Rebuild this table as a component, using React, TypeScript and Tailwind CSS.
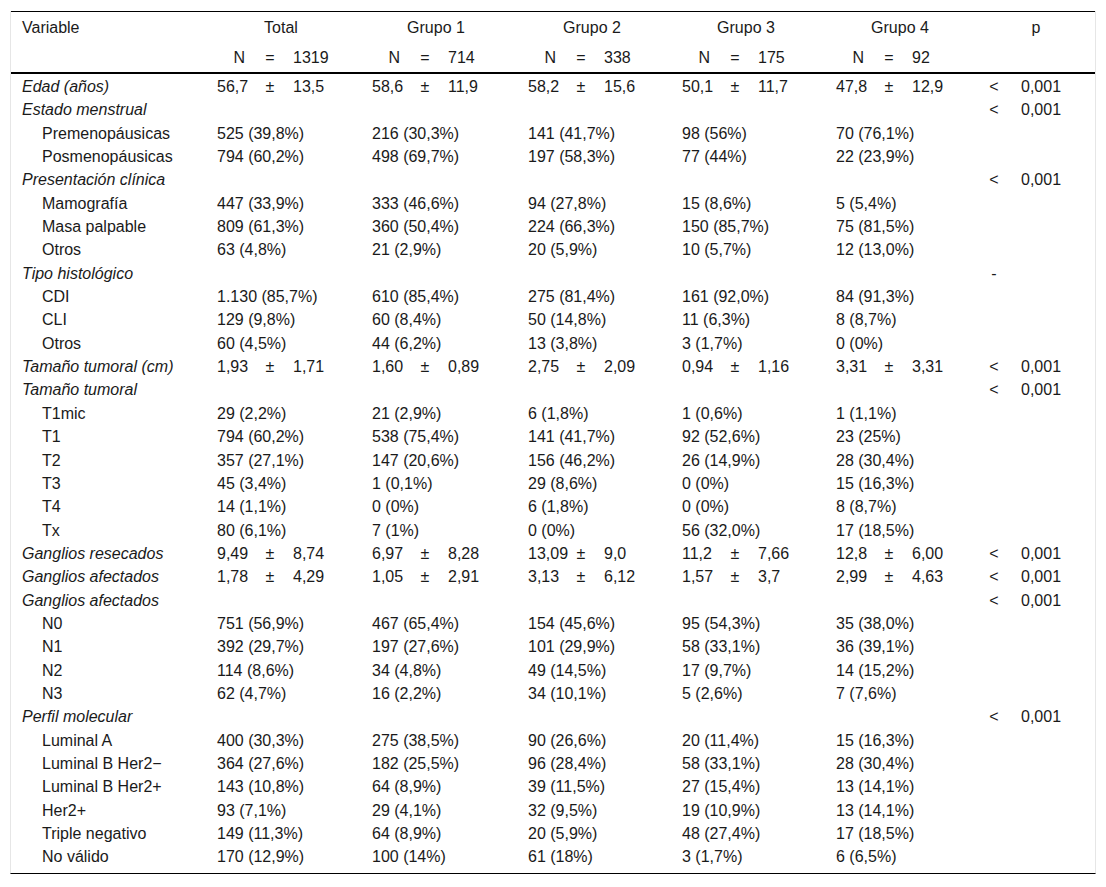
type MeanSd = [string, string]
type Row =
  | { kind: "mean"; label: string; values: MeanSd[]; p: [string, string] }
  | { kind: "cat"; label: string; p?: [string, string] }
  | { kind: "item"; label: string; values: string[] }

const ROWS: Row[] = [
  {
    kind: "mean",
    label: "Edad (años)",
    values: [["56,7", "13,5"], ["58,6", "11,9"], ["58,2", "15,6"], ["50,1", "11,7"], ["47,8", "12,9"]],
    p: ["<", "0,001"],
  },
  { kind: "cat", label: "Estado menstrual", p: ["<", "0,001"] },
  { kind: "item", label: "Premenopáusicas", values: ["525 (39,8%)", "216 (30,3%)", "141 (41,7%)", "98 (56%)", "70 (76,1%)"] },
  { kind: "item", label: "Posmenopáusicas", values: ["794 (60,2%)", "498 (69,7%)", "197 (58,3%)", "77 (44%)", "22 (23,9%)"] },
  { kind: "cat", label: "Presentación clínica", p: ["<", "0,001"] },
  { kind: "item", label: "Mamografía", values: ["447 (33,9%)", "333 (46,6%)", "94 (27,8%)", "15 (8,6%)", "5 (5,4%)"] },
  { kind: "item", label: "Masa palpable", values: ["809 (61,3%)", "360 (50,4%)", "224 (66,3%)", "150 (85,7%)", "75 (81,5%)"] },
  { kind: "item", label: "Otros", values: ["63 (4,8%)", "21 (2,9%)", "20 (5,9%)", "10 (5,7%)", "12 (13,0%)"] },
  { kind: "cat", label: "Tipo histológico", p: ["-", ""] },
  { kind: "item", label: "CDI", values: ["1.130 (85,7%)", "610 (85,4%)", "275 (81,4%)", "161 (92,0%)", "84 (91,3%)"] },
  { kind: "item", label: "CLI", values: ["129 (9,8%)", "60 (8,4%)", "50 (14,8%)", "11 (6,3%)", "8 (8,7%)"] },
  { kind: "item", label: "Otros", values: ["60 (4,5%)", "44 (6,2%)", "13 (3,8%)", "3 (1,7%)", "0 (0%)"] },
  {
    kind: "mean",
    label: "Tamaño tumoral (cm)",
    values: [["1,93", "1,71"], ["1,60", "0,89"], ["2,75", "2,09"], ["0,94", "1,16"], ["3,31", "3,31"]],
    p: ["<", "0,001"],
  },
  { kind: "cat", label: "Tamaño tumoral", p: ["<", "0,001"] },
  { kind: "item", label: "T1mic", values: ["29 (2,2%)", "21 (2,9%)", "6 (1,8%)", "1 (0,6%)", "1 (1,1%)"] },
  { kind: "item", label: "T1", values: ["794 (60,2%)", "538 (75,4%)", "141 (41,7%)", "92 (52,6%)", "23 (25%)"] },
  { kind: "item", label: "T2", values: ["357 (27,1%)", "147 (20,6%)", "156 (46,2%)", "26 (14,9%)", "28 (30,4%)"] },
  { kind: "item", label: "T3", values: ["45 (3,4%)", "1 (0,1%)", "29 (8,6%)", "0 (0%)", "15 (16,3%)"] },
  { kind: "item", label: "T4", values: ["14 (1,1%)", "0 (0%)", "6 (1,8%)", "0 (0%)", "8 (8,7%)"] },
  { kind: "item", label: "Tx", values: ["80 (6,1%)", "7 (1%)", "0 (0%)", "56 (32,0%)", "17 (18,5%)"] },
  {
    kind: "mean",
    label: "Ganglios resecados",
    values: [["9,49", "8,74"], ["6,97", "8,28"], ["13,09", "9,0"], ["11,2", "7,66"], ["12,8", "6,00"]],
    p: ["<", "0,001"],
  },
  {
    kind: "mean",
    label: "Ganglios afectados",
    values: [["1,78", "4,29"], ["1,05", "2,91"], ["3,13", "6,12"], ["1,57", "3,7"], ["2,99", "4,63"]],
    p: ["<", "0,001"],
  },
  { kind: "cat", label: "Ganglios afectados", p: ["<", "0,001"] },
  { kind: "item", label: "N0", values: ["751 (56,9%)", "467 (65,4%)", "154 (45,6%)", "95 (54,3%)", "35 (38,0%)"] },
  { kind: "item", label: "N1", values: ["392 (29,7%)", "197 (27,6%)", "101 (29,9%)", "58 (33,1%)", "36 (39,1%)"] },
  { kind: "item", label: "N2", values: ["114 (8,6%)", "34 (4,8%)", "49 (14,5%)", "17 (9,7%)", "14 (15,2%)"] },
  { kind: "item", label: "N3", values: ["62 (4,7%)", "16 (2,2%)", "34 (10,1%)", "5 (2,6%)", "7 (7,6%)"] },
  { kind: "cat", label: "Perfil molecular", p: ["<", "0,001"] },
  { kind: "item", label: "Luminal A", values: ["400 (30,3%)", "275 (38,5%)", "90 (26,6%)", "20 (11,4%)", "15 (16,3%)"] },
  { kind: "item", label: "Luminal B Her2−", values: ["364 (27,6%)", "182 (25,5%)", "96 (28,4%)", "58 (33,1%)", "28 (30,4%)"] },
  { kind: "item", label: "Luminal B Her2+", values: ["143 (10,8%)", "64 (8,9%)", "39 (11,5%)", "27 (15,4%)", "13 (14,1%)"] },
  { kind: "item", label: "Her2+", values: ["93 (7,1%)", "29 (4,1%)", "32 (9,5%)", "19 (10,9%)", "13 (14,1%)"] },
  { kind: "item", label: "Triple negativo", values: ["149 (11,3%)", "64 (8,9%)", "20 (5,9%)", "48 (27,4%)", "17 (18,5%)"] },
  { kind: "item", label: "No válido", values: ["170 (12,9%)", "100 (14%)", "61 (18%)", "3 (1,7%)", "6 (6,5%)"] },
]

const GROUPS = [
  { name: "Total", n: "1319" },
  { name: "Grupo 1", n: "714" },
  { name: "Grupo 2", n: "338" },
  { name: "Grupo 3", n: "175" },
  { name: "Grupo 4", n: "92" },
]

// column grid shared by header and body rows
const GRID = "grid grid-cols-[206px_155px_156px_154px_154px_149px_110px]"

function Triple({ a, b, c, alignA = "left" }: { a: string; b: string; c: string; alignA?: "left" | "right" }) {
  return (
    <div className="flex whitespace-nowrap">
      <span className={`w-[30px] ${alignA === "right" ? "text-right pr-[2px]" : ""}`}>{a}</span>
      <span className="w-[46px] text-center">{b}</span>
      <span>{c}</span>
    </div>
  )
}

function PCell({ p }: { p?: [string, string] }) {
  if (!p) return <div />
  return (
    <div className="flex whitespace-nowrap">
      <span className="w-[18px] text-center">{p[0]}</span>
      <span className="ml-[18px]">{p[1]}</span>
    </div>
  )
}

export default function App() {
  return (
    <div
      className="bg-white min-h-[887px] pt-[11px] text-[16px] text-[#1a1a1a]"
      style={{ fontFamily: '"Liberation Sans", Arial, sans-serif' }}
    >
      <div className="mx-[10px] border-x border-[#e6e6e6] pb-[4px] border-b border-b-black">
        <div className="border-t border-black">
          {/* Header */}
          <div className={`${GRID} h-[31px] items-center`}>
            <div className="pl-[11px]">Variable</div>
            {GROUPS.map((g) => (
              <div key={g.name} className="w-[128px] text-center">
                {g.name}
              </div>
            ))}
            <div className="w-[102px] text-center">p</div>
          </div>
          <div className={`${GRID} h-[31px] items-center border-b-2 border-black`}>
            <div />
            {GROUPS.map((g) => (
              <Triple key={g.name} a="N" b="=" c={g.n} alignA="right" />
            ))}
            <div />
          </div>

          {/* Body */}
          <div className="pt-[1px]">
            {ROWS.map((row, i) => (
              <div key={i} className={`${GRID} h-[23.35px] items-center whitespace-nowrap`}>
                {row.kind === "item" ? (
                  <>
                    <div className="pl-[31px]">{row.label}</div>
                    {row.values.map((v, j) => (
                      <div key={j}>{v}</div>
                    ))}
                    <div />
                  </>
                ) : row.kind === "mean" ? (
                  <>
                    <div className="pl-[11px] italic">{row.label}</div>
                    {row.values.map((v, j) => (
                      <Triple key={j} a={v[0]} b="±" c={v[1]} />
                    ))}
                    <PCell p={row.p} />
                  </>
                ) : (
                  <>
                    <div className="pl-[11px] italic">{row.label}</div>
                    <div />
                    <div />
                    <div />
                    <div />
                    <div />
                    <PCell p={row.p} />
                  </>
                )}
              </div>
            ))}
          </div>
        </div>
      </div>
    </div>
  )
}
